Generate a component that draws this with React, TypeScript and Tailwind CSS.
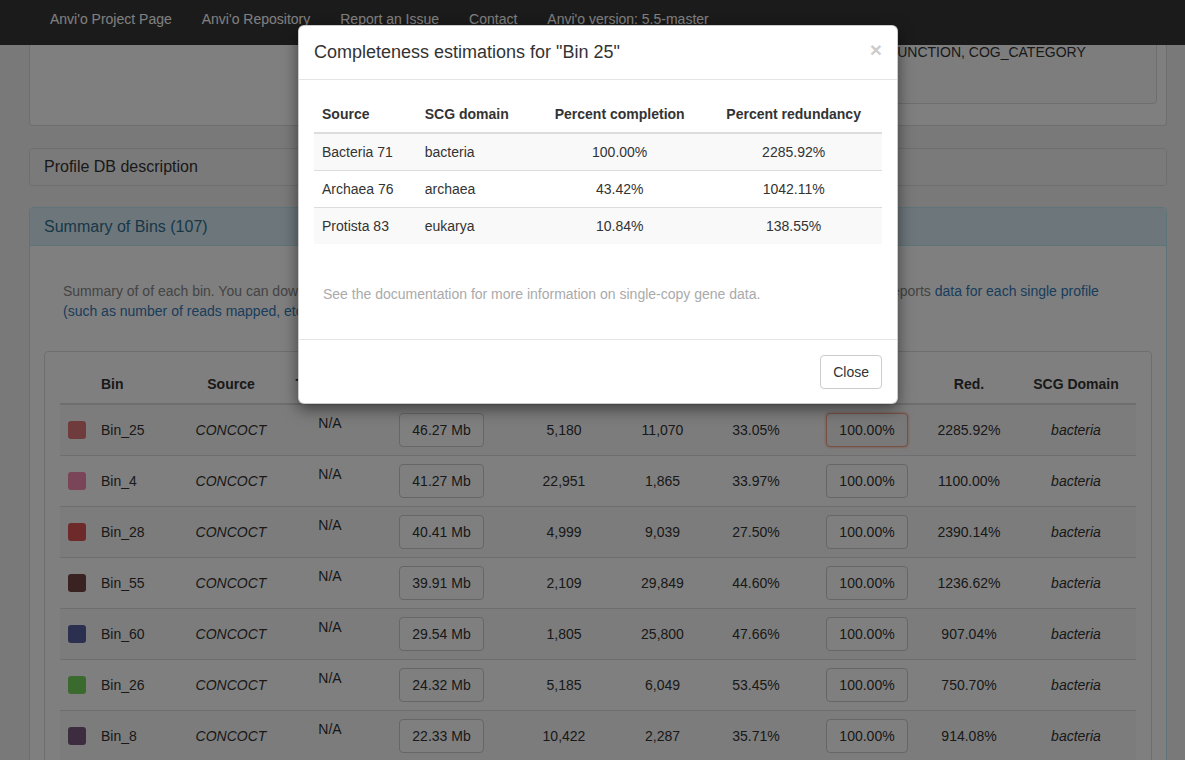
import React from "react";

type Row = {
  name: string;
  swatch: string;
  length: string;
  contigs: string;
  n50: string;
  gc: string;
  compl: string;
  red: string;
};

const rows: Row[] = [
  { name: "Bin_25", swatch: "bg-[#de7679]", length: "46.27 Mb", contigs: "5,180", n50: "11,070", gc: "33.05%", compl: "100.00%", red: "2285.92%" },
  { name: "Bin_4", swatch: "bg-[#f488b2]", length: "41.27 Mb", contigs: "22,951", n50: "1,865", gc: "33.97%", compl: "100.00%", red: "1100.00%" },
  { name: "Bin_28", swatch: "bg-[#dc5454]", length: "40.41 Mb", contigs: "4,999", n50: "9,039", gc: "27.50%", compl: "100.00%", red: "2390.14%" },
  { name: "Bin_55", swatch: "bg-[#744446]", length: "39.91 Mb", contigs: "2,109", n50: "29,849", gc: "44.60%", compl: "100.00%", red: "1236.62%" },
  { name: "Bin_60", swatch: "bg-[#5860a0]", length: "29.54 Mb", contigs: "1,805", n50: "25,800", gc: "47.66%", compl: "100.00%", red: "907.04%" },
  { name: "Bin_26", swatch: "bg-[#74d45c]", length: "24.32 Mb", contigs: "5,185", n50: "6,049", gc: "53.45%", compl: "100.00%", red: "750.70%" },
  { name: "Bin_8", swatch: "bg-[#7a5880]", length: "22.33 Mb", contigs: "10,422", n50: "2,287", gc: "35.71%", compl: "100.00%", red: "914.08%" },
  { name: "Bin_12", swatch: "bg-[#6aa0d0]", length: "21.90 Mb", contigs: "3,456", n50: "8,120", gc: "41.02%", compl: "100.00%", red: "820.11%" },
];

const scgRows = [
  { source: "Bacteria 71", domain: "bacteria", compl: "100.00%", red: "2285.92%" },
  { source: "Archaea 76", domain: "archaea", compl: "43.42%", red: "1042.11%" },
  { source: "Protista 83", domain: "eukarya", compl: "10.84%", red: "138.55%" },
];

function Navbar() {
  const items = [
    "Anvi'o Project Page",
    "Anvi'o Repository",
    "Report an Issue",
    "Contact",
    "Anvi'o version: 5.5-master",
  ];
  return (
    <nav className="absolute top-0 left-0 right-0 z-10 h-[45px] bg-[#363636] flex items-start pl-[35px] pt-[9px]">
      {items.map((t) => (
        <span key={t} className="px-[15px] leading-[20px] text-[14px] text-white">
          {t}
        </span>
      ))}
    </nav>
  );
}

function BinsTable() {
  const th = "px-[8px] pt-[8px] pb-[9px] leading-[20px] border-b-2 border-[#ddd] font-bold text-[#333]";
  const td = "px-[8px] py-[8px] leading-[20px] border-t border-[#ddd] align-middle";
  return (
    <table className="w-[1076px] table-fixed border-collapse text-[14px] text-[#333]">
      <colgroup>
        <col className="w-[33px]" />
        <col className="w-[82px]" />
        <col className="w-[112px]" />
        <col className="w-[86px]" />
        <col className="w-[137px]" />
        <col className="w-[108px]" />
        <col className="w-[89px]" />
        <col className="w-[98px]" />
        <col className="w-[124px]" />
        <col className="w-[80px]" />
        <col className="w-[127px]" />
      </colgroup>
      <thead>
        <tr>
          <th className={th}></th>
          <th className={`${th} text-left`}>Bin</th>
          <th className={`${th} text-center`}>Source</th>
          <th className={`${th} text-center`}>Taxonomy</th>
          <th className={`${th} text-center`}>Total Length</th>
          <th className={`${th} text-center`}>Num Contigs</th>
          <th className={`${th} text-center`}>N50</th>
          <th className={`${th} text-center`}>GC Content</th>
          <th className={`${th} text-center`}>Compl.</th>
          <th className={`${th} text-center`}>Red.</th>
          <th className={`${th} text-center pl-[15px]`}>SCG Domain</th>
        </tr>
      </thead>
      <tbody>
        {rows.map((r, i) => (
          <tr key={r.name} className={i % 2 === 0 ? "bg-[#f9f9f9]" : "bg-white"}>
            <td className={td}>
              <div className={`w-[18px] h-[18px] rounded-[3px] ${r.swatch}`} />
            </td>
            <td className={`${td} text-left`}>{r.name}</td>
            <td className={`${td} text-center italic`}>CONCOCT</td>
            <td className="px-[8px] py-[8px] leading-[20px] border-t border-[#ddd] align-top text-center">N/A</td>
            <td className={td}>
              <div className="mx-auto w-fit px-[12px] py-[6px] leading-[20px] border border-[#ccc] rounded-[4px] bg-white">
                {r.length}
              </div>
            </td>
            <td className={`${td} text-center`}>{r.contigs}</td>
            <td className={`${td} text-center`}>{r.n50}</td>
            <td className={`${td} text-center`}>{r.gc}</td>
            <td className={td}>
              <div
                className={
                  i === 0
                    ? "mx-auto w-fit px-[12px] py-[6px] leading-[20px] border border-[#f0a083] rounded-[4px] bg-[#f2f2f2] shadow-[0_0_3px_rgba(230,110,70,0.6)]"
                    : "mx-auto w-fit px-[12px] py-[6px] leading-[20px] border border-[#ccc] rounded-[4px] bg-white"
                }
              >
                {r.compl}
              </div>
            </td>
            <td className={`${td} text-center`}>{r.red}</td>
            <td className={`${td} text-center italic pl-[15px]`}>bacteria</td>
          </tr>
        ))}
      </tbody>
    </table>
  );
}

function Modal() {
  const th = "px-[8px] py-[8px] leading-[20px] border-b-2 border-[#ddd] font-bold";
  const td = "px-[8px] py-[8px] leading-[20px]";
  return (
    <div className="absolute inset-0 z-30">
      <div className="ml-[298px] mt-[25px] w-[600px] bg-white border border-black/20 rounded-[6px] shadow-[0_5px_15px_rgba(0,0,0,0.5)] text-[14px] text-[#333]">
        <div className="flex items-start justify-between px-[15px] py-[15px] border-b border-[#e5e5e5]">
          <h4 className="text-[18px] leading-[23px] font-normal text-[#333]">
            Completeness estimations for "Bin 25"
          </h4>
          <span className="text-[21px] font-bold leading-[21px] text-black opacity-20 -mt-[2px]">×</span>
        </div>
        <div className="px-[15px] pt-[16px] pb-[15px]">
          <table className="w-full border-collapse">
            <thead>
              <tr>
                <th className={`${th} text-left`}>Source</th>
                <th className={`${th} text-left`}>SCG domain</th>
                <th className={`${th} text-center`}>Percent completion</th>
                <th className={`${th} text-center`}>Percent redundancy</th>
              </tr>
            </thead>
            <tbody>
              {scgRows.map((r, i) => (
                <tr
                  key={r.source}
                  className={`${i % 2 === 0 ? "bg-[#f9f9f9]" : "bg-white"} ${i > 0 ? "border-t border-[#ddd]" : ""}`}
                >
                  <td className={`${td} text-left`}>{r.source}</td>
                  <td className={`${td} text-left`}>{r.domain}</td>
                  <td className={`${td} text-center`}>{r.compl}</td>
                  <td className={`${td} text-center`}>{r.red}</td>
                </tr>
              ))}
            </tbody>
          </table>
          <p className="mt-[40px] mb-[20px] pl-[9px] leading-[20px] text-[#aaa]">
            See the documentation for more information on single-copy gene data.
          </p>
        </div>
        <div className="flex justify-end border-t border-[#e5e5e5] px-[15px] pt-[15px] pb-[14px]">
          <button className="px-[12px] py-[6px] leading-[20px] border border-[#ccc] rounded-[4px] bg-white text-[#333] text-[14px]">
            Close
          </button>
        </div>
      </div>
    </div>
  );
}

export default function App() {
  return (
    <div className="relative h-[760px] w-[1185px] overflow-hidden bg-[#f2f2f2] font-['Liberation_Sans',Arial,sans-serif] text-[14px] text-[#333]">
      <Navbar />
      <main className="pl-[29px] w-[1167px]">
        {/* Panel 1 (scrolled, top hidden under navbar) */}
        <div className="h-[126px] bg-white border border-t-0 border-[#ddd] rounded-b-[4px] flex justify-end items-end pr-[9px] pb-[21px]">
          <div className="w-[323px] h-[84px] border border-[#ddd] rounded-[4px] bg-[#fafafa] pl-[14px] pt-[21px] leading-[20px]">
            COG_FUNCTION, COG_CATEGORY
          </div>
        </div>

        {/* Panel 2 */}
        <div className="mt-[22px] bg-white border border-[#ddd] rounded-[4px]">
          <div className="h-[36px] flex items-center px-[14px] bg-[#f5f5f5] text-[16px] text-[#333] rounded-[4px]">
            Profile DB description
          </div>
        </div>

        {/* Panel 3 */}
        <div className="mt-[21px] bg-white border border-[#bce8f1] rounded-[4px]">
          <div className="h-[38px] flex items-center px-[14px] bg-[#d9edf7] border-b border-[#bce8f1] text-[16px] text-[#31708f] rounded-t-[4px]">
            Summary of Bins (107)
          </div>
          <div className="px-[14px]">
            <p className="pt-[35px] px-[19px] leading-[20px] text-[#888] mb-[30px]">
              Summary of of each bin. You can download FASTA files coverage and other information for each bin from the links below. Anvi'o also reports{" "}
              <span className="text-[#337ab7]">data for each single profile (such as number of reads mapped, etc.)</span>
            </p>
            <div className="border border-[#ddd] rounded-[4px] pt-[14px] px-[15px] pb-[20px]">
              <BinsTable />
            </div>
          </div>
        </div>
      </main>

      {/* Backdrop */}
      <div className="absolute inset-0 z-20 bg-black/50" />
      <Modal />
    </div>
  );
}
